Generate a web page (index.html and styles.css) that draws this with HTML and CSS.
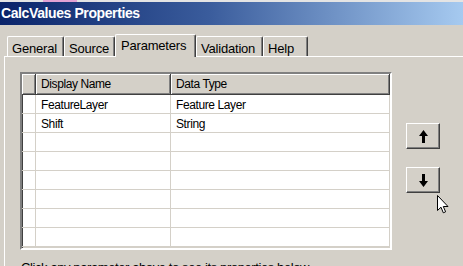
FILE: index.html
```html
<!DOCTYPE html>
<html>
<head>
<meta charset="utf-8">
<title>CalcValues Properties</title>
<link rel="stylesheet" href="styles.css">
</head>
<body>
<div class="window">
  <div class="topstrip"><span class="topstrip-accent"></span></div>
  <div class="titlebar"><span class="title">CalcValues Properties</span></div>
  <div class="tabs">
    <div class="tab tab-general">General</div>
    <div class="tab tab-source">Source</div>
    <div class="tab tab-params is-active">Parameters</div>
    <div class="tab tab-validation">Validation</div>
    <div class="tab tab-help">Help</div>
  </div>
  <div class="panel">
    <div class="panel-body">
      <div class="grid">
        <div class="grid-head">
          <div class="hcell"></div>
          <div class="hcell">Display Name</div>
          <div class="hcell">Data Type</div>
        </div>
        <div class="grid-body">
          <div class="row"><div class="cell"></div><div class="cell">FeatureLayer</div><div class="cell">Feature Layer</div></div>
          <div class="row"><div class="cell"></div><div class="cell">Shift</div><div class="cell">String</div></div>
          <div class="row"><div class="cell"></div><div class="cell"></div><div class="cell"></div></div>
          <div class="row"><div class="cell"></div><div class="cell"></div><div class="cell"></div></div>
          <div class="row"><div class="cell"></div><div class="cell"></div><div class="cell"></div></div>
          <div class="row"><div class="cell"></div><div class="cell"></div><div class="cell"></div></div>
          <div class="row"><div class="cell"></div><div class="cell"></div><div class="cell"></div></div>
          <div class="row"><div class="cell"></div><div class="cell"></div><div class="cell"></div></div>
          <div class="row"><div class="cell"></div><div class="cell"></div><div class="cell"></div></div>
        </div>
      </div>
      <div class="movers">
        <button class="mover" type="button" aria-label="Move up">
          <svg width="9" height="13" viewBox="0 0 9 13"><path d="M4.5 0 L9 6 H6 V13 H3 V6 H0 Z" fill="#000"/></svg>
        </button>
        <button class="mover" type="button" aria-label="Move down">
          <svg width="9" height="13" viewBox="0 0 9 13"><path d="M4.5 13 L9 7 H6 V0 H3 V7 H0 Z" fill="#000"/></svg>
        </button>
      </div>
    </div>
    <p class="hint">Click any parameter above to see its properties below.</p>
  </div>
  <svg class="cursor" width="12" height="19" viewBox="0 0 12 19">
    <path d="M0.5 0.5 L0.5 15.5 L4 12.2 L6.3 17.8 L8.6 16.8 L6.3 11.5 L11 11.5 Z" fill="#fff" stroke="#000" stroke-width="1" stroke-linejoin="miter"/>
  </svg>
</div>
</body>
</html>
```

FILE: styles.css
```css
html, body {
  margin: 0;
  padding: 0;
}

body {
  background: #d4d0c8;
  font-family: "Liberation Sans", Arial, sans-serif;
  font-size: 12px;
  color: #000;
}

.window {
  position: relative;
  width: 463px;
  height: 266px;
  overflow: hidden;
  background: #d4d0c8;
}

.topstrip {
  height: 2px;
  background: #e4e4e4;
  display: flex;
}

.topstrip-accent {
  margin-left: 43px;
  width: 34px;
  background: #e2a2d4;
}

.titlebar {
  height: 23px;
  background: linear-gradient(to right, #0a246a 0%, #3a5c9c 45%, #a6caf0 100%);
  box-sizing: border-box;
  padding: 1px 0 0 1px;
}

.title {
  color: #fff;
  font-weight: bold;
  font-size: 14px;
  line-height: 21px;
  letter-spacing: -0.4px;
}

.tabs {
  display: flex;
  align-items: flex-end;
  margin: 9px 0 0 7px;
  height: 22px;
}

.tab {
  box-sizing: border-box;
  height: 20px;
  padding: 4px 0 0 4px;
  font-size: 13px;
  line-height: 15px;
  letter-spacing: -0.2px;
  white-space: nowrap;
  background: #d4d0c8;
  border-top: 1px solid #fff;
  border-left: 1px solid #fff;
  border-right: 1px solid #404040;
  border-radius: 2px 2px 0 0;
  box-shadow: inset -1px 0 #808080;
}

.tab-general { width: 57px; }
.tab-source { width: 51px; }
.tab-params { width: 81px; }
.tab-validation { width: 67px; }
.tab-help { width: 45px; }

.tab.is-active {
  height: 23px;
  margin-bottom: -1px;
  padding: 3px 0 0 5px;
  position: relative;
  z-index: 1;
}

.panel {
  margin-left: 4px;
  border-top: 1px solid #fff;
  border-left: 1px solid #fff;
  padding: 15px 0 0 15px;
}

.panel-body {
  display: flex;
  gap: 14px;
}

.grid {
  box-sizing: border-box;
  width: 372px;
  height: 178px;
  border: 2px solid;
  border-color: #808080 #fff #fff #808080;
  box-shadow: inset 1px 1px #404040, inset -1px -1px #d4d0c8;
  background: #fff;
  overflow: hidden;
  display: flex;
  flex-direction: column;
}

.grid-head,
.row {
  display: grid;
  grid-template-columns: 14px 135px 1fr;
}

.grid-head {
  height: 21px;
  flex: none;
}

.hcell {
  box-sizing: border-box;
  height: 21px;
  background: #d4d0c8;
  padding: 2px 0 0 5px;
  line-height: 17px;
  letter-spacing: -0.4px;
  white-space: nowrap;
  border-right: 1px solid #404040;
  border-bottom: 1px solid #404040;
  box-shadow: inset 1px 1px #fff, inset -1px -1px #808080;
}

.grid-body {
  flex: 1;
  overflow: hidden;
}

.row {
  height: 19px;
}

.cell {
  box-sizing: border-box;
  height: 19px;
  padding: 2px 0 0 5px;
  line-height: 16px;
  letter-spacing: -0.4px;
  white-space: nowrap;
  border-right: 1px solid #d4d0c8;
  border-bottom: 1px solid #d4d0c8;
}

.cell:first-child {
  padding: 0;
}

.cell:last-child {
  border-right: 0;
}

.movers {
  display: flex;
  flex-direction: column;
  gap: 18px;
  padding-top: 51px;
}

.mover {
  box-sizing: border-box;
  width: 34px;
  height: 26px;
  padding: 0;
  margin: 0;
  background: #d4d0c8;
  border: 1px solid;
  border-color: #fff #404040 #404040 #fff;
  box-shadow: inset -1px -1px #808080;
  display: flex;
  align-items: center;
  justify-content: center;
}

.mover svg {
  display: block;
}

.hint {
  margin: 10px 0 0 1px;
  font-size: 13px;
  line-height: 15px;
  letter-spacing: -0.4px;
  white-space: nowrap;
}

.cursor {
  position: absolute;
  left: 437px;
  top: 195px;
}
```
